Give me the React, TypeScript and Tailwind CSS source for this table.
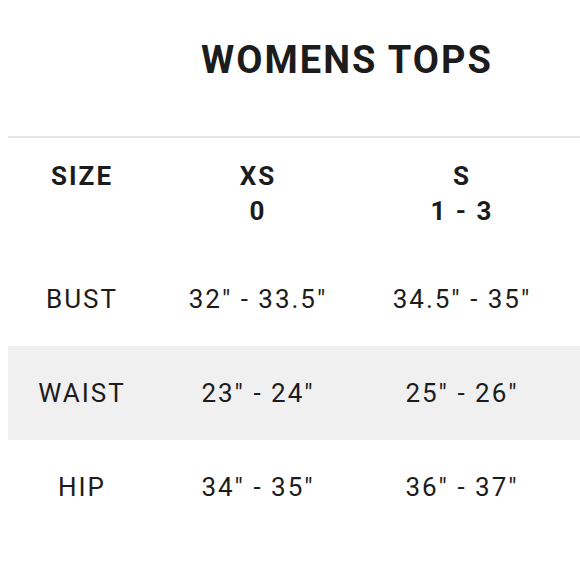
import React from 'react';

const rows = [
  { label: 'BUST', xs: '32" - 33.5"', s: '34.5" - 35"', shaded: false },
  { label: 'WAIST', xs: '23" - 24"', s: '25" - 26"', shaded: true },
  { label: 'HIP', xs: '34" - 35"', s: '36" - 37"', shaded: false },
];

export default function App() {
  return (
    <div className="w-[580px] h-[580px] bg-white overflow-hidden text-[#1c1c1c] font-['Roboto','Liberation_Sans',sans-serif]">
      {/* Title */}
      <div className="h-[136px] pl-[114px] pt-[36px]">
        <h1 className="text-center text-[38px] leading-[48px] font-bold tracking-[2px]">WOMENS TOPS</h1>
      </div>

      <div className="ml-2">
        <div className="h-[2px] bg-[#e4e4e4]" />

        {/* Header row */}
        <div className="grid grid-cols-[148px_204px_204px] h-[114px] pt-[21px] text-[26px] leading-[35px] font-bold tracking-[2px] text-center">
          <div>SIZE</div>
          <div>
            <div>XS</div>
            <div>0</div>
          </div>
          <div>
            <div>S</div>
            <div>1 - 3</div>
          </div>
        </div>

        {/* Measurements */}
        {rows.map((r) => (
          <div
            key={r.label}
            className={`grid grid-cols-[148px_204px_204px] h-[94px] items-center text-center text-[26px] tracking-[2px] ${r.shaded ? 'bg-[#f0f0f0]' : ''}`}
          >
            <div>{r.label}</div>
            <div>{r.xs}</div>
            <div>{r.s}</div>
          </div>
        ))}
      </div>
    </div>
  );
}
